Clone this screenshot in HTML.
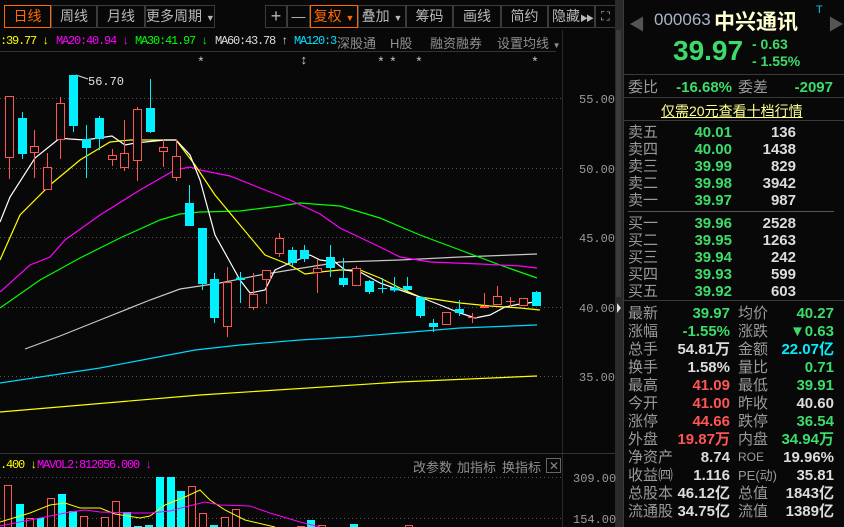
<!DOCTYPE html>
<html><head><meta charset="utf-8"><style>
*{margin:0;padding:0;box-sizing:border-box}
body{width:844px;height:527px;background:#080808;overflow:hidden;position:relative;font-family:"Liberation Sans","Noto Sans CJK SC",sans-serif;color:#a8a8a8}
.a{position:absolute;white-space:nowrap}
.btn{position:absolute;top:5px;height:23px;border:1px solid #3c3c3c;font-size:14px;line-height:21px;text-align:center;color:#b8b8b8;white-space:nowrap;overflow:hidden}
.o{border-color:#ff6a00;color:#ff6a00}
.m{font-family:"Liberation Mono","Noto Sans CJK SC",monospace;font-size:12px;letter-spacing:-1.2px}
.p{font-size:15px;line-height:17px}
.g{color:#3ddc6a}.r{color:#ff5555}.w{color:#dcdcdc}.c{color:#00f0ff}.l{color:#9a9a9a}
.num{font-weight:bold;text-align:right}
</style></head><body>
<!-- toolbar -->
<div class="btn o" style="left:4px;width:47px">日线</div>
<div class="btn" style="left:51px;width:46px">周线</div>
<div class="btn" style="left:97px;width:48px">月线</div>
<div class="btn" style="left:145px;width:70px">更多周期 <span style="font-size:9px">▼</span></div>
<div class="btn" style="left:265px;width:22px;font-size:18px">+</div>
<div class="btn" style="left:287px;width:23px">—</div>
<div class="btn o" style="left:310px;width:48px">复权 <span style="font-size:9px">▼</span></div>
<div class="btn" style="left:358px;width:48px">叠加 <span style="font-size:9px">▼</span></div>
<div class="btn" style="left:406px;width:47px">筹码</div>
<div class="btn" style="left:453px;width:48px">画线</div>
<div class="btn" style="left:501px;width:47px">简约</div>
<div class="btn" style="left:548px;width:47px;text-align:left;padding-left:3px">隐藏<span style="font-size:8px;letter-spacing:-2px">▶▶</span></div>
<div class="btn" style="left:595px;width:21px;font-size:12px">⛶</div>
<!-- MA row -->
<div class="a m" style="left:0;top:34px;color:#ffff00">:39.77 ↓</div>
<div class="a m" style="left:56px;top:34px;color:#ff00ff">MA20:40.94 ↓</div>
<div class="a m" style="left:135px;top:34px;color:#00ff00">MA30:41.97 ↓</div>
<div class="a m" style="left:215px;top:34px;color:#dcdcdc">MA60:43.78 ↑</div>
<div class="a m" style="left:294px;top:34px;color:#00e0ff">MA120:3</div>
<div class="a" style="left:337px;top:33px;font-size:13px;color:#909090">深股通</div>
<div class="a" style="left:390px;top:33px;font-size:13px;color:#909090">H股</div>
<div class="a" style="left:430px;top:33px;font-size:13px;color:#909090">融资融券</div>
<div class="a" style="left:497px;top:33px;font-size:13px;color:#909090">设置均线 <span style="font-size:8px">▼</span></div>
<svg class="a" style="left:0;top:0" width="623" height="527">
<line x1="0" y1="51.5" x2="556" y2="51.5" stroke="#333"/>
<line x1="562.5" y1="30" x2="562.5" y2="527" stroke="#2a2a2a"/>
<line x1="0" y1="453.5" x2="615" y2="453.5" stroke="#333"/>
<rect x="615" y="0" width="8" height="527" fill="#2a2a2a"/>
<rect x="616" y="30" width="5" height="267" fill="#3a3a3a"/>
<polygon points="617,303 621,308 617,313" fill="#ddd"/>
<g fill="#ccc" font-size="13" font-family="Liberation Mono">
<text x="197" y="66">*</text><text x="300" y="64">↕</text><text x="377" y="66">*</text><text x="389" y="66">*</text><text x="415" y="66">*</text><text x="531" y="66">*</text></g>
<g stroke="#555" stroke-dasharray="1,3">
<line x1="0" y1="98.5" x2="562" y2="98.5"/><line x1="0" y1="168.5" x2="562" y2="168.5"/><line x1="0" y1="237.5" x2="562" y2="237.5"/><line x1="0" y1="307.5" x2="562" y2="307.5"/><line x1="0" y1="376.5" x2="562" y2="376.5"/>
<line x1="0" y1="477.5" x2="562" y2="477.5"/><line x1="0" y1="518.5" x2="562" y2="518.5"/></g>
<g fill="#9a9a9a" font-size="12" font-family="Liberation Mono">
<text x="579" y="103">55.00</text><text x="579" y="173">50.00</text><text x="579" y="242">45.00</text><text x="579" y="312">40.00</text><text x="579" y="381">35.00</text>
<text x="573" y="482">309.00</text><text x="573" y="523">154.00</text></g>
<text x="88" y="85" fill="#e0e0e0" font-size="12" font-family="Liberation Mono">56.70</text>
<polyline points="76,75 88,79" stroke="#ddd" fill="none"/>
<!-- MAs -->
<g fill="none" stroke-width="1.2">
<polyline stroke="#ffff00" points="0,412 200,395 400,382 537,376"/>
<polyline stroke="#00d8ff" points="0,383 100,368 195,350 240,345 300,340 350,337 400,333 460,328 537,325"/>
<polyline stroke="#c8c8c8" points="25,349 60,336 100,320 150,300 180,289 220,283 260,275 290,270 340,262 400,260 460,257 537,254"/>
<polyline stroke="#00ff00" points="0,308 40,280 80,258 120,238 160,220 180,214 200,212 240,211 280,206 300,203 340,206 380,218 420,235 460,250 500,265 537,278"/>
<polyline stroke="#ff00ff" points="0,292 30,265 50,257 65,240 100,215 140,190 175,170 190,167 200,170 230,176 260,188 290,200 320,214 340,228 380,247 400,257 430,262 480,264 520,266 537,268"/>
<polyline stroke="#ffff00" points="0,260 20,215 50,185 80,160 110,142 130,140 150,140 176,140 195,165 215,195 240,225 265,255 290,265 305,274 320,272 340,270 360,270 380,278 400,288 420,297 460,303 490,306 520,308 540,310"/>
<polyline stroke="#ffffff" points="0,222 10,197 35,158 60,138 70,139 85,140 112,136 125,145 135,143 165,140 176,140 190,155 200,180 215,235 230,262 240,280 250,293 265,290 275,270 290,263 310,255 320,260 335,262 345,270 360,272 380,283 400,290 420,297 440,305 460,313 475,318 490,315 505,307 520,304 535,302"/>
</g>
<!-- candles -->
<g stroke="#ff5555" fill="#080808">
<line x1="-1" y1="160" x2="-1" y2="210"/>
<line x1="9.5" y1="96" x2="9.5" y2="179"/><rect x="5.5" y="96.5" width="8" height="61"/>
<line x1="34.5" y1="130" x2="34.5" y2="178"/><rect x="30.5" y="146.5" width="8" height="6"/>
<line x1="47.5" y1="153" x2="47.5" y2="189"/><rect x="43.5" y="167.5" width="8" height="22"/>
<line x1="60.5" y1="97" x2="60.5" y2="159"/><rect x="56.5" y="103.5" width="8" height="36"/>
<line x1="112.5" y1="149" x2="112.5" y2="166"/><rect x="108.5" y="155.5" width="8" height="4"/>
<line x1="124.5" y1="120" x2="124.5" y2="171"/><rect x="120.5" y="153.5" width="8" height="14"/>
<line x1="137.5" y1="107" x2="137.5" y2="181"/><rect x="133.5" y="109.5" width="8" height="51"/>
<line x1="163.5" y1="139" x2="163.5" y2="167"/><rect x="159.5" y="147.5" width="8" height="4"/>
<line x1="176.5" y1="140" x2="176.5" y2="181"/><rect x="172.5" y="156.5" width="8" height="21"/>
<line x1="227.5" y1="267" x2="227.5" y2="337"/><rect x="223.5" y="282.5" width="8" height="44"/>
<line x1="253.5" y1="273" x2="253.5" y2="310"/><rect x="249.5" y="294.5" width="8" height="13"/>
<line x1="266.5" y1="270" x2="266.5" y2="304"/><rect x="262.5" y="270.5" width="8" height="9"/>
<line x1="279.5" y1="233" x2="279.5" y2="257"/><rect x="275.5" y="238.5" width="8" height="15"/>
<line x1="317.5" y1="259" x2="317.5" y2="293"/><rect x="313.5" y="268.5" width="8" height="4"/>
<line x1="356.5" y1="266" x2="356.5" y2="285"/><rect x="352.5" y="268.5" width="8" height="17"/>
<rect x="442.5" y="312.5" width="8" height="12"/>
<line x1="472.5" y1="313" x2="472.5" y2="323"/><line x1="468" y1="317.5" x2="477" y2="317.5"/>
<line x1="484.5" y1="293" x2="484.5" y2="307"/><rect x="480.5" y="306.5" width="8" height="1"/>
<line x1="497.5" y1="286" x2="497.5" y2="304"/><rect x="493.5" y="296.5" width="8" height="8"/>
<line x1="510.5" y1="297" x2="510.5" y2="307"/><line x1="506" y1="301.5" x2="515" y2="301.5"/>
<rect x="519.5" y="298.5" width="8" height="7"/>
</g>
<g fill="#00f0ff" stroke="#00f0ff">
<line x1="22.5" y1="112" x2="22.5" y2="159"/><rect x="18.5" y="118.5" width="8" height="35"/>
<line x1="73.5" y1="75" x2="73.5" y2="132"/><rect x="69.5" y="75.5" width="8" height="50"/>
<line x1="86.5" y1="125" x2="86.5" y2="178"/><rect x="82.5" y="139.5" width="8" height="8"/>
<line x1="99.5" y1="116" x2="99.5" y2="150"/><rect x="95.5" y="118.5" width="8" height="20"/>
<line x1="150.5" y1="79" x2="150.5" y2="133"/><rect x="146.5" y="108.5" width="8" height="23"/>
<line x1="189.5" y1="185" x2="189.5" y2="226"/><rect x="185.5" y="203.5" width="8" height="22"/>
<line x1="202.5" y1="228" x2="202.5" y2="290"/><rect x="198.5" y="228.5" width="8" height="55"/>
<line x1="214.5" y1="273" x2="214.5" y2="323"/><rect x="210.5" y="279.5" width="8" height="38"/>
<line x1="240.5" y1="272" x2="240.5" y2="303"/><rect x="236.5" y="278" width="8" height="1.5"/>
<line x1="292.5" y1="247" x2="292.5" y2="266"/><rect x="288.5" y="250.5" width="8" height="12"/>
<line x1="304.5" y1="245" x2="304.5" y2="262"/><rect x="300.5" y="250.5" width="8" height="8"/>
<line x1="330.5" y1="245" x2="330.5" y2="277"/><rect x="326.5" y="257.5" width="8" height="10"/>
<line x1="343.5" y1="258" x2="343.5" y2="287"/><rect x="339.5" y="278.5" width="8" height="6"/>
<line x1="369.5" y1="280" x2="369.5" y2="294"/><rect x="365.5" y="281.5" width="8" height="10"/>
<line x1="382.5" y1="278" x2="382.5" y2="293"/><line x1="378" y1="288.5" x2="387" y2="288.5"/>
<line x1="394.5" y1="277" x2="394.5" y2="292"/><rect x="390.5" y="288" width="8" height="2"/>
<line x1="407.5" y1="277" x2="407.5" y2="291"/><rect x="403.5" y="286.5" width="8" height="3"/>
<line x1="420.5" y1="297" x2="420.5" y2="318"/><rect x="416.5" y="297.5" width="8" height="18"/>
<line x1="433.5" y1="319" x2="433.5" y2="332"/><rect x="429.5" y="323.5" width="8" height="3"/>
<line x1="459.5" y1="300" x2="459.5" y2="316"/><rect x="455.5" y="309.5" width="8" height="3"/>
<line x1="536.5" y1="291" x2="536.5" y2="306"/><rect x="532.5" y="292.5" width="8" height="13"/>
</g>
<!-- volume -->
<g stroke="#ff5555" fill="#080808">
<rect x="4.5" y="485.5" width="7" height="45"/><rect x="26.5" y="518.5" width="7" height="12"/>
<rect x="47.5" y="498.5" width="7" height="32"/><rect x="80.5" y="516.5" width="7" height="14"/>
<rect x="101.5" y="517.5" width="7" height="13"/><rect x="112.5" y="501.5" width="7" height="29"/>
<rect x="188.5" y="486.5" width="7" height="44"/><rect x="199.5" y="513.5" width="7" height="17"/>
<rect x="221.5" y="517.5" width="7" height="13"/><rect x="232.5" y="509.5" width="7" height="21"/>
<rect x="297.5" y="526.5" width="7" height="4"/><rect x="318.5" y="525.5" width="7" height="4"/><rect x="405.5" y="525.5" width="7" height="4"/>
</g>
<g fill="#00ffff">
<rect x="16" y="504" width="8" height="23"/><rect x="37" y="518" width="7" height="9"/>
<rect x="58" y="494" width="8" height="33"/><rect x="69" y="511" width="8" height="16"/>
<rect x="123" y="512" width="8" height="15"/><rect x="134" y="526" width="8" height="1"/><rect x="145" y="525" width="8" height="2"/>
<rect x="156" y="477" width="8" height="50"/><rect x="167" y="477" width="8" height="50"/><rect x="177" y="491" width="8" height="36"/>
<rect x="210" y="525" width="8" height="2"/><rect x="307" y="520" width="8" height="7"/><rect x="350" y="524" width="8" height="3"/>
</g>
<polyline fill="none" stroke="#ffff00" points="0,522 30,513 50,505 65,503 80,508 100,508 115,514 140,518 150,516 165,505 185,497 200,490 210,500 225,510 245,520 275,527"/>
<polyline fill="none" stroke="#ff00ff" points="0,526 30,520 55,515 70,512 85,510 100,512 130,513 150,513 170,511 185,507 205,502 220,505 250,506 270,513 300,522 320,527"/>
<rect x="546.5" y="458.5" width="14" height="14" fill="none" stroke="#666"/>
<text x="549" y="470" fill="#888" font-size="12">✕</text>
</svg>
<div class="a m" style="left:0;top:458px;color:#ffff00">.400 ↓</div>
<div class="a m" style="left:37px;top:458px;color:#ff00ff">MAVOL2:812056.000 ↓</div>
<div class="a" style="left:413px;top:457px;font-size:13px;color:#909090">改参数</div>
<div class="a" style="left:457px;top:457px;font-size:13px;color:#909090">加指标</div>
<div class="a" style="left:502px;top:457px;font-size:13px;color:#909090">换指标</div>
<!-- right panel -->
<div class="a" style="left:623px;top:0;width:1px;height:527px;background:#3a3a3a"></div>
<div class="a" style="left:623px;top:74px;width:221px;height:1px;background:#3a3a3a"></div>
<div class="a" style="left:623px;top:97px;width:221px;height:1px;background:#3a3a3a"></div>
<div class="a" style="left:623px;top:120px;width:221px;height:1px;background:#3a3a3a"></div>
<div class="a" style="left:628px;top:211px;width:206px;height:1px;background:#555"></div>
<div class="a" style="left:623px;top:300px;width:221px;height:1px;background:#3a3a3a"></div>
<div class="a" style="left:629px;top:11px;font-size:16px;color:#555">◀</div>
<div class="a" style="left:828px;top:11px;font-size:16px;color:#555">▶</div>
<div class="a" style="left:654px;top:10px;font-size:17px;color:#a8b4cc">000063</div>
<div class="a" style="left:714px;top:6px;font-size:21px;font-weight:bold;color:#ffffd0">中兴通讯</div>
<div class="a" style="left:816px;top:4px;font-size:11px;color:#00c8ff">T</div>
<div class="a g" style="left:673px;top:35px;font-size:28px;font-weight:bold">39.97</div>
<div class="a g" style="left:752px;top:36px;font-size:14px;font-weight:bold">- 0.63</div>
<div class="a g" style="left:752px;top:53px;font-size:14px;font-weight:bold">- 1.55%</div>
<div class="a p l" style="left:628px;top:79px">委比</div>
<div class="a p g num" style="left:670px;top:79px;width:62px">-16.68%</div>
<div class="a p l" style="left:738px;top:79px">委差</div>
<div class="a p g num" style="left:770px;top:79px;width:63px">-2097</div>
<div class="a" style="left:661px;top:101px;font-size:14px;color:#ffff90;text-decoration:underline">仅需20元查看十档行情</div>
<div class="a p" style="left:628px;top:124px;width:206px;line-height:17px">
<div style="position:relative;height:17px"><span class="l">卖五</span><span class="a g num" style="right:102px">40.01</span><span class="a w num" style="right:38px">136</span></div>
<div style="position:relative;height:17px"><span class="l">卖四</span><span class="a g num" style="right:102px">40.00</span><span class="a w num" style="right:38px">1438</span></div>
<div style="position:relative;height:17px"><span class="l">卖三</span><span class="a g num" style="right:102px">39.99</span><span class="a w num" style="right:38px">829</span></div>
<div style="position:relative;height:17px"><span class="l">卖二</span><span class="a g num" style="right:102px">39.98</span><span class="a w num" style="right:38px">3942</span></div>
<div style="position:relative;height:17px"><span class="l">卖一</span><span class="a g num" style="right:102px">39.97</span><span class="a w num" style="right:38px">987</span></div>
<div style="height:6px"></div>
<div style="position:relative;height:17px"><span class="l">买一</span><span class="a g num" style="right:102px">39.96</span><span class="a w num" style="right:38px">2528</span></div>
<div style="position:relative;height:17px"><span class="l">买二</span><span class="a g num" style="right:102px">39.95</span><span class="a w num" style="right:38px">1263</span></div>
<div style="position:relative;height:17px"><span class="l">买三</span><span class="a g num" style="right:102px">39.94</span><span class="a w num" style="right:38px">242</span></div>
<div style="position:relative;height:17px"><span class="l">买四</span><span class="a g num" style="right:102px">39.93</span><span class="a w num" style="right:38px">599</span></div>
<div style="position:relative;height:17px"><span class="l">买五</span><span class="a g num" style="right:102px">39.92</span><span class="a w num" style="right:38px">603</span></div>
</div>
<div class="a p" style="left:628px;top:305px;width:206px">
<div style="position:relative;height:18px"><span class="l">最新</span><span class="a g num" style="right:104px">39.97</span><span class="a l" style="left:110px">均价</span><span class="a g num" style="right:0">40.27</span></div>
<div style="position:relative;height:18px"><span class="l">涨幅</span><span class="a g num" style="right:104px">-1.55%</span><span class="a l" style="left:110px">涨跌</span><span class="a g num" style="right:0">▼0.63</span></div>
<div style="position:relative;height:18px"><span class="l">总手</span><span class="a w num" style="right:104px">54.81万</span><span class="a l" style="left:110px">金额</span><span class="a c num" style="right:0">22.07亿</span></div>
<div style="position:relative;height:18px"><span class="l">换手</span><span class="a w num" style="right:104px">1.58%</span><span class="a l" style="left:110px">量比</span><span class="a g num" style="right:0">0.71</span></div>
<div style="position:relative;height:18px"><span class="l">最高</span><span class="a r num" style="right:104px">41.09</span><span class="a l" style="left:110px">最低</span><span class="a g num" style="right:0">39.91</span></div>
<div style="position:relative;height:18px"><span class="l">今开</span><span class="a r num" style="right:104px">41.00</span><span class="a l" style="left:110px">昨收</span><span class="a w num" style="right:0">40.60</span></div>
<div style="position:relative;height:18px"><span class="l">涨停</span><span class="a r num" style="right:104px">44.66</span><span class="a l" style="left:110px">跌停</span><span class="a g num" style="right:0">36.54</span></div>
<div style="position:relative;height:18px"><span class="l">外盘</span><span class="a r num" style="right:104px">19.87万</span><span class="a l" style="left:110px">内盘</span><span class="a g num" style="right:0">34.94万</span></div>
<div style="position:relative;height:18px"><span class="l">净资产</span><span class="a w num" style="right:104px">8.74</span><span class="a l" style="left:110px;font-size:12px">ROE</span><span class="a w num" style="right:0">19.96%</span></div>
<div style="position:relative;height:18px"><span class="l">收益㈣</span><span class="a w num" style="right:104px">1.116</span><span class="a l" style="left:110px;font-size:13px">PE(动)</span><span class="a w num" style="right:0">35.81</span></div>
<div style="position:relative;height:18px"><span class="l">总股本</span><span class="a w num" style="right:104px">46.12亿</span><span class="a l" style="left:110px">总值</span><span class="a w num" style="right:0">1843亿</span></div>
<div style="position:relative;height:18px"><span class="l">流通股</span><span class="a w num" style="right:104px">34.75亿</span><span class="a l" style="left:110px">流值</span><span class="a w num" style="right:0">1389亿</span></div>
</div>
</body></html>
